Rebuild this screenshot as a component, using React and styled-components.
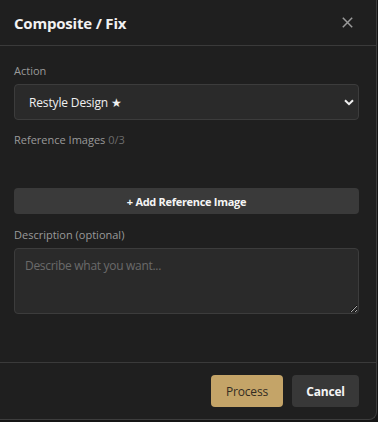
import React, { useState } from 'react';
import styled, { createGlobalStyle } from 'styled-components';

const GlobalStyle = createGlobalStyle`
  html, body {
    margin: 0;
    padding: 0;
    background: #151515;
  }
  body {
    font-family: "Open Sans", "Noto Sans", "Liberation Sans", sans-serif;
  }
`;

const Dialog = styled.div`
  width: 376px;
  height: 419px;
  background: #1f1f1f;
  border-right: 1px solid #3d3d3d;
  border-bottom: 1px solid #3d3d3d;
  border-bottom-right-radius: 8px;
  display: flex;
  flex-direction: column;
  box-sizing: content-box;
`;

const Header = styled.div`
  height: 46px;
  border-bottom: 1px solid #3a3a3a;
  display: flex;
  align-items: center;
  justify-content: space-between;
  padding: 0 23px 0 14px;
  box-sizing: border-box;
`;

const Title = styled.h2`
  margin: 0;
  font-size: 15px;
  font-weight: 700;
  letter-spacing: -0.2px;
  color: #f2f2f2;
`;

const CloseButton = styled.button`
  background: none;
  border: none;
  padding: 0;
  width: 11px;
  height: 12px;
  display: flex;
  align-items: center;
  justify-content: center;
  cursor: pointer;
`;

const Body = styled.div`
  flex: 1;
  padding: 17px 17px 0 14px;
  display: flex;
  flex-direction: column;
`;

const Label = styled.label`
  font-size: 11px;
  line-height: 16px;
  color: #9a9a9a;
  margin-top: ${p => p.$top || 0}px;
  margin-bottom: 5px;
`;

const Count = styled.span`
  color: #6c6c6c;
`;

const SelectBox = styled.div`
  position: relative;
  height: 36px;
  background: #2a2a2a;
  border: 1px solid #3c3c3c;
  border-radius: 4px;
  box-sizing: border-box;
  display: flex;
  align-items: center;
  padding-left: 14px;
  font-size: 12px;
  letter-spacing: -0.15px;
  color: #f0f0f0;
`;

const Chevron = styled.svg`
  position: absolute;
  right: 4px;
  top: 14px;
`;

const Thumbs = styled.div`
  height: 35px;
`;

const AddButton = styled.button`
  height: 26px;
  background: #3a3a3a;
  border: none;
  border-radius: 4px;
  color: #f5f5f5;
  font-family: inherit;
  font-size: 11px;
  font-weight: 700;
  letter-spacing: -0.3px;
  cursor: pointer;
`;

const TextArea = styled.textarea`
  height: 66px;
  background: #2a2a2a;
  border: 1px solid #3c3c3c;
  border-radius: 4px;
  box-sizing: border-box;
  padding: 8px 10px;
  font-family: inherit;
  font-size: 12px;
  letter-spacing: -0.3px;
  color: #eee;
  resize: vertical;
  outline: none;
  &::placeholder {
    color: #6a6a6a;
  }
`;

const Footer = styled.div`
  height: 57px;
  border-top: 1px solid #3a3a3a;
  display: flex;
  justify-content: flex-end;
  align-items: flex-start;
  gap: 9px;
  padding: 12px 17px 0 0;
  box-sizing: border-box;
`;

const Button = styled.button`
  height: 32px;
  width: ${p => (p.$primary ? 72 : 67)}px;
  padding: 0;
  border: none;
  border-radius: 4px;
  background: ${p => (p.$primary ? '#c4a468' : '#383838')};
  color: ${p => (p.$primary ? '#332c22' : '#f5f5f5')};
  font-family: inherit;
  font-size: 12px;
  font-weight: ${p => (p.$primary ? 400 : 700)};
  letter-spacing: -0.2px;
  cursor: pointer;
`;

export default function App() {
  const [desc, setDesc] = useState('');
  return (
    <>
      <GlobalStyle />
      <Dialog>
        <Header>
          <Title>Composite / Fix</Title>
          <CloseButton aria-label="Close">
            <svg width="11" height="11" viewBox="0 0 11 11">
              <path d="M0.8 0.8L10.2 10.2M10.2 0.8L0.8 10.2" stroke="#9a9a9a" strokeWidth="1.5" />
            </svg>
          </CloseButton>
        </Header>
        <Body>
          <Label>Action</Label>
          <SelectBox>
            Restyle Design ★
            <Chevron width="10" height="7" viewBox="0 0 10 7">
              <path d="M1 1.2L5 5.2L9 1.2" stroke="#f0f0f0" strokeWidth="2" fill="none" />
            </Chevron>
          </SelectBox>
          <Label $top={12}>
            Reference Images <Count>0/3</Count>
          </Label>
          <Thumbs />
          <AddButton>+ Add Reference Image</AddButton>
          <Label $top={13}>Description (optional)</Label>
          <TextArea
            placeholder="Describe what you want..."
            value={desc}
            onChange={e => setDesc(e.target.value)}
          />
        </Body>
        <Footer>
          <Button $primary>Process</Button>
          <Button>Cancel</Button>
        </Footer>
      </Dialog>
    </>
  );
}
